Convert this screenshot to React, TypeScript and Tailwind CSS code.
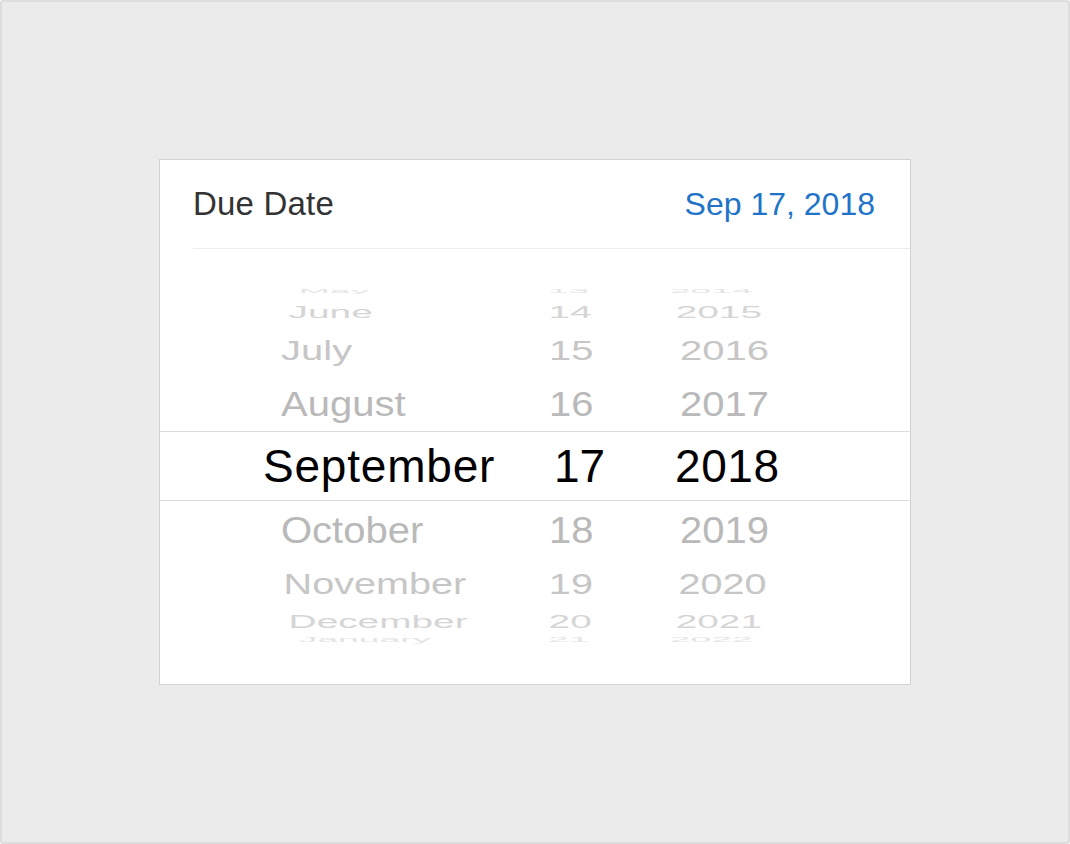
import React from 'react';

type WheelRow = {
    month: string;
    day: string;
    year: string;
    h: number;
    sx: number;
    sy: number;
    color: string;
};

const ROWS_ABOVE: WheelRow[] = [
    { month: 'May', day: '13', year: '2014', h: 18, sx: 0.93, sy: 0.15, color: '#e4e4e4' },
    { month: 'June', day: '14', year: '2015', h: 24, sx: 0.97, sy: 0.43, color: '#d5d5d5' },
    { month: 'July', day: '15', year: '2016', h: 52, sx: 1, sy: 0.7, color: '#c6c6c6' },
    { month: 'August', day: '16', year: '2017', h: 55, sx: 1, sy: 0.88, color: '#b9b9b9' },
];

const ROWS_BELOW: WheelRow[] = [
    { month: 'October', day: '18', year: '2019', h: 58, sx: 1, sy: 0.9, color: '#b9b9b9' },
    { month: 'November', day: '19', year: '2020', h: 49, sx: 0.99, sy: 0.73, color: '#c6c6c6' },
    { month: 'December', day: '20', year: '2021', h: 27, sx: 0.97, sy: 0.45, color: '#d5d5d5' },
    { month: 'January', day: '21', year: '2022', h: 9, sx: 0.93, sy: 0.17, color: '#e4e4e4' },
];

function FadedRow({ row }: { row: WheelRow }) {
    return (
        <div className="flex items-center" style={{ height: row.h }}>
            <div
                className="flex w-full items-center text-[40px] leading-none whitespace-nowrap"
                style={{ transform: `scale(${row.sx}, ${row.sy})`, color: row.color }}
            >
                <span className="w-[389px] shrink-0 pl-[121px]">{row.month}</span>
                <span className="w-[131px] shrink-0">{row.day}</span>
                <span className="shrink-0">{row.year}</span>
            </div>
        </div>
    );
}

export default function App() {
    return (
        <div className="flex h-[844px] w-[1070px] items-center justify-center rounded-[3px] border-2 border-[#dddddd] bg-[#ebebeb] font-['Liberation_Sans',Arial,sans-serif]">
            <div className="w-[752px] border border-[#d2d2d2] bg-white">
                {/* header */}
                <div className="pl-[33px]">
                    <div className="flex h-[89px] items-center justify-between border-b border-[#ececec] pr-[35px]">
                        <span className="text-[33px] tracking-[0.2px] text-[#333333]">Due Date</span>
                        <span className="text-[32px] text-[#1f74c9]">Sep 17, 2018</span>
                    </div>
                </div>

                {/* wheel */}
                <div className="flex flex-col pt-[33px] pb-[40px]">
                    {ROWS_ABOVE.map((row) => (
                        <FadedRow key={row.month} row={row} />
                    ))}
                    <div className="flex h-[70px] items-center border-y border-[#dcdcdc] text-[46px] leading-none whitespace-nowrap text-black">
                        <span className="w-[394px] shrink-0 pl-[103px] tracking-[0.8px]">September</span>
                        <span className="w-[121px] shrink-0">17</span>
                        <span className="shrink-0 tracking-[0.6px]">2018</span>
                    </div>
                    {ROWS_BELOW.map((row) => (
                        <FadedRow key={row.month} row={row} />
                    ))}
                </div>
            </div>
        </div>
    );
}
